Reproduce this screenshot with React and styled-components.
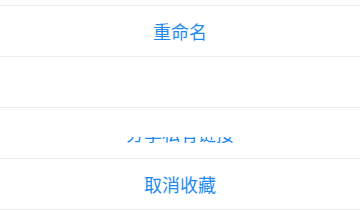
import React from 'react';
import styled, { createGlobalStyle } from 'styled-components';

const GlobalStyle = createGlobalStyle`
  html, body {
    margin: 0;
    padding: 0;
    background: #ffffff;
  }
`;

const Sheet = styled.div`
  width: 360px;
  height: 210px;
  overflow: hidden;
  padding-top: 5px;
  box-sizing: border-box;
  background: #ffffff;
  font-family: "Noto Sans CJK SC", "Noto Sans", sans-serif;
`;

const Row = styled.div`
  height: 50px;
  border-top: 1px solid #ececec;
  display: flex;
  justify-content: center;
  align-items: center;
`;

const Label = styled.span`
  font-size: 18px;
  line-height: 50px;
  color: #1f8bf2;
  clip-path: ${(p) => (p.$clipTop ? `inset(${p.$clipTop}px 0 0 0)` : 'none')};
`;

const items = [
  { text: '重命名' },
  { text: '' },
  { text: '分享私有链接', clipTop: 29 },
  { text: '取消收藏' },
];

export default function App() {
  return (
    <>
      <GlobalStyle />
      <Sheet>
        {items.map((item, i) => (
          <Row key={i}>
            <Label $clipTop={item.clipTop}>{item.text}</Label>
          </Row>
        ))}
        <Row />
      </Sheet>
    </>
  );
}
